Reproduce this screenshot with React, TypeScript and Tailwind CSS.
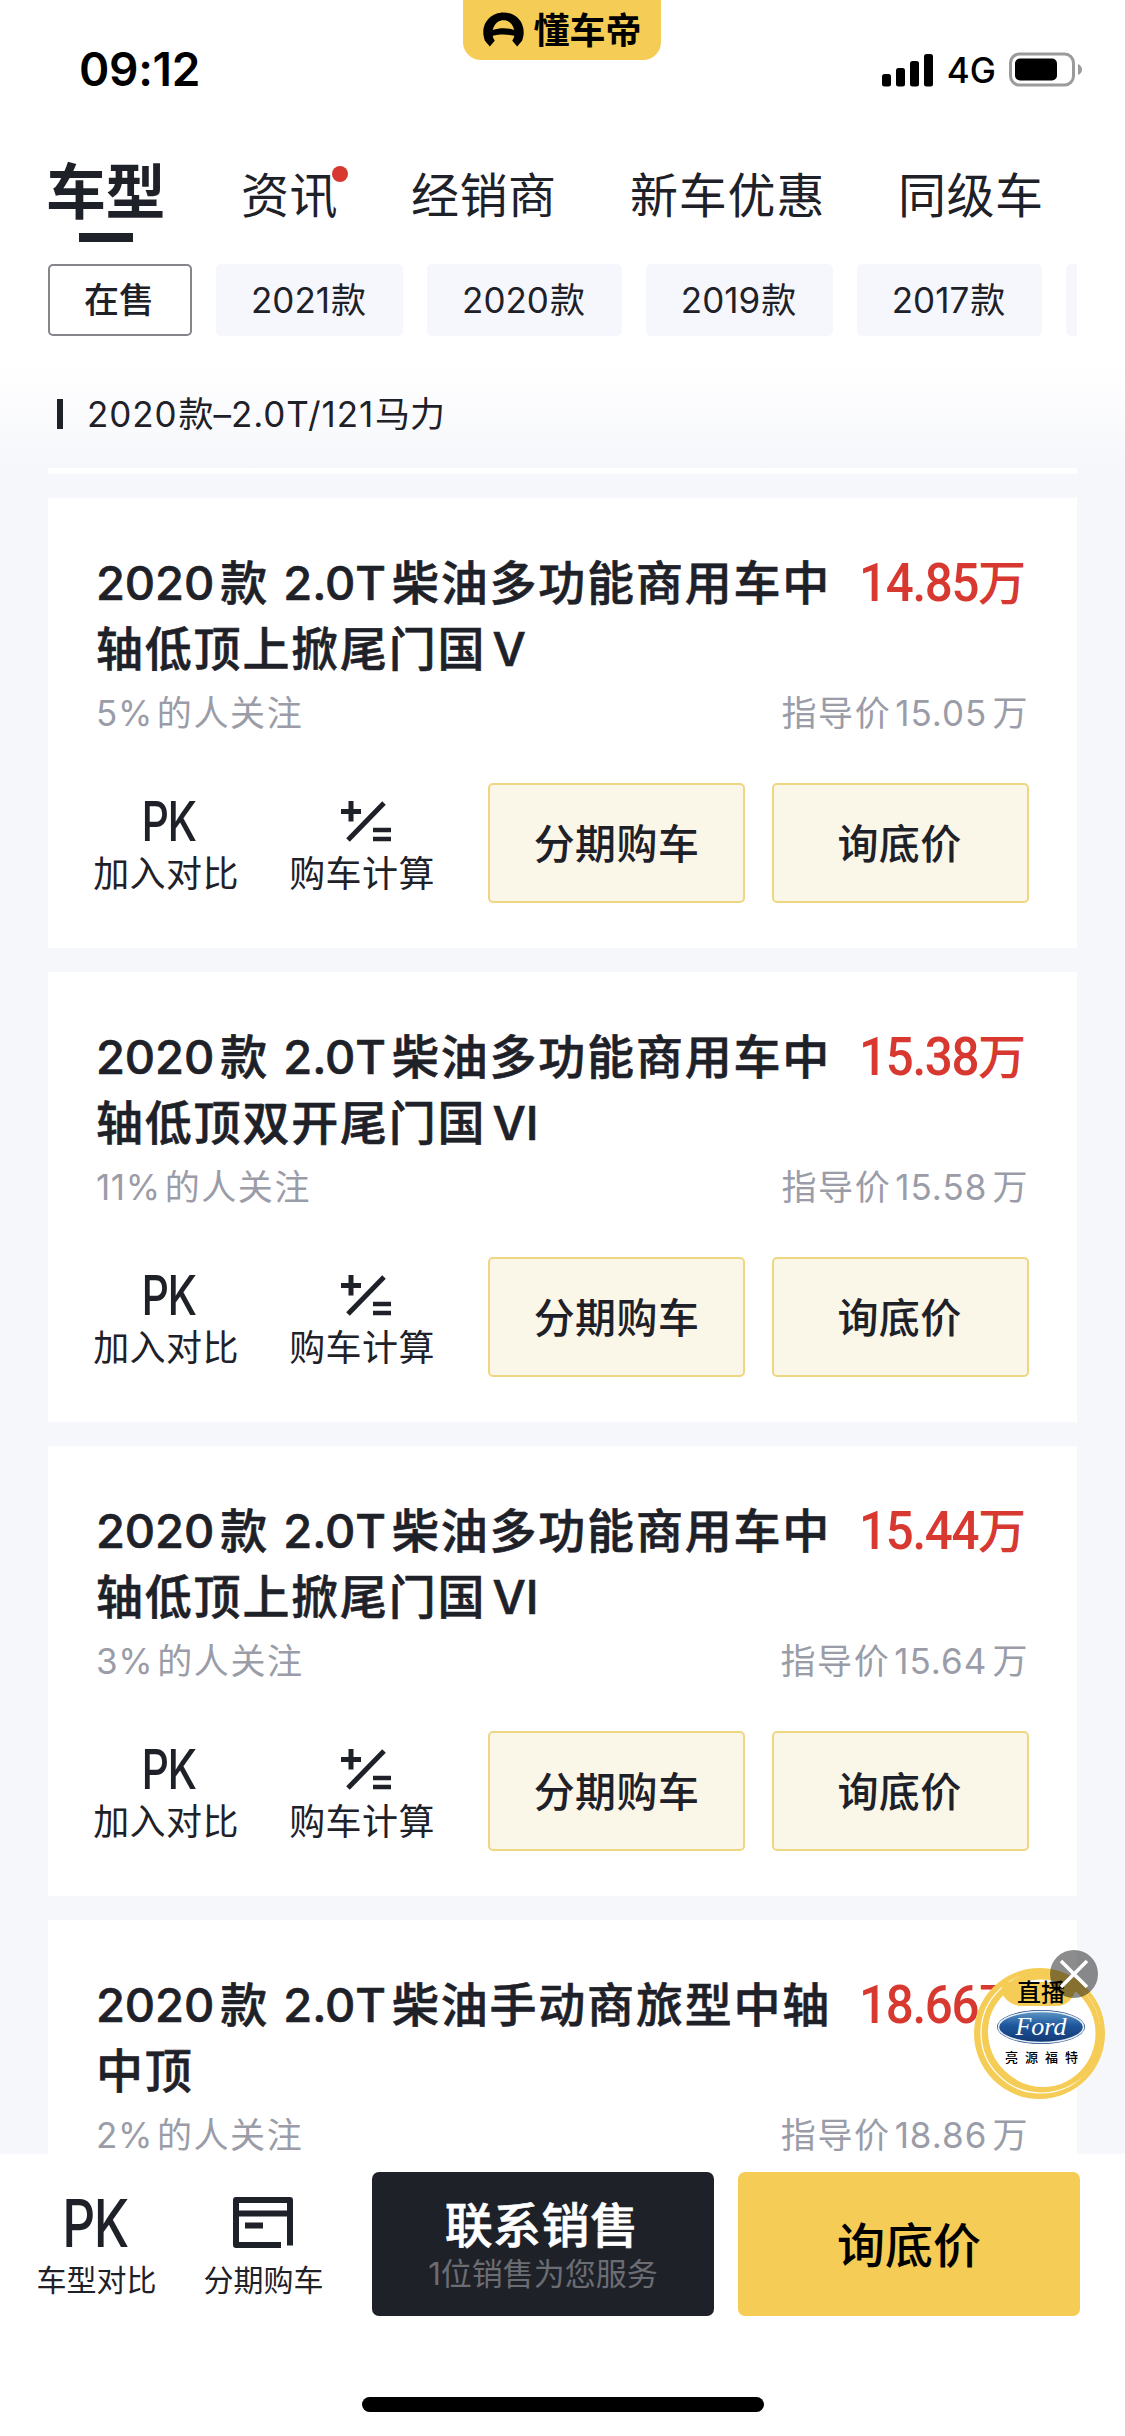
import React, { useState } from "react";

const models = [
  { id: 1, name: "2020款 2.0T柴油多功能商用车中轴低顶上掀尾门国V", price: "14.85", guide: "15.05", follow: "5%", actions: true },
  { id: 2, name: "2020款 2.0T柴油多功能商用车中轴低顶双开尾门国VI", price: "15.38", guide: "15.58", follow: "11%", actions: true },
  { id: 3, name: "2020款 2.0T柴油多功能商用车中轴低顶上掀尾门国VI", price: "15.44", guide: "15.64", follow: "3%", actions: true },
  { id: 4, name: "2020款 2.0T柴油手动商旅型中轴中顶", price: "18.66", guide: "18.86", follow: "2%", actions: false },
];

const years = [
  { label: "在售", width: "w-36" },
  { label: "2021款", width: "w-[187px]" },
  { label: "2020款", width: "w-[195px]" },
  { label: "2019款", width: "w-[187px]" },
  { label: "2017款", width: "w-[185px]" },
  { label: "", width: "w-[185px]" },
];

function StatusBar() {
  return (
    <div className="flex h-[132px] items-start">
      <div className="w-[463px] pl-[79px] pt-[42px] text-[46px] leading-[54px] font-semibold tracking-[-0.3px] text-black">09:12</div>
      <div className="flex h-[60px] w-[198px] items-start justify-center gap-[8px] rounded-b-[18px] bg-[#f5cd56] pt-[11px]">
        <svg width="43" height="37" viewBox="0 0 44 37">
          <path d="M8 36 L3 30 C-3 14 8 1 22 1 C36 1 47 14 41 30 L36 36 L31 30 C32 28 33 27 33 25 C26 23 18 23 11 25 C11 27 12 28 13 30 Z" fill="#000" />
          <path d="M11 19 C13 11 18 9 22 9 C26 9 31 11 33 19 C26 16.500 18 16.500 11 19 Z" fill="#f5cd56" />
        </svg>
        <span className="text-[36px] leading-[41px] font-bold text-black">懂车帝</span>
      </div>
      <div className="flex flex-1 items-center justify-end gap-[13px] pr-[43px] pt-[50px]">
        <svg width="52" height="33" viewBox="0 0 52 33">
          <rect x="0" y="20" width="9" height="12.500" rx="2.500" />
          <rect x="14" y="14" width="9" height="18.500" rx="2.500" />
          <rect x="28" y="7" width="9" height="25.500" rx="2.500" />
          <rect x="42" y="0" width="9" height="32.500" rx="2.500" />
        </svg>
        <span className="text-[35px] leading-[40px] font-medium text-black">4G</span>
        <svg width="73" height="36" viewBox="0 0 73 36">
          <rect x="1.500" y="2" width="63" height="31" rx="9" fill="none" stroke="#9b9b9b" strokeWidth="3" />
          <rect x="6" y="6.500" width="42" height="22" rx="5" />
          <path d="M69 12 Q73 14 73 17.500 Q73 21 69 23 Z" fill="#9b9b9b" />
        </svg>
      </div>
    </div>
  );
}

// digits and latin words get a little air around them, as in the app
function Mixed({ text, latin }: { text: string; latin: string }) {
  return (
    <>
      {text.split(/([0-9A-Z.%/]+)/).map((part, i) =>
        i % 2 ? <span key={i} className={`${latin} ${/^V/.test(part) ? "ml-[6px]" : ""}`}>{part}</span> : part
      )}
    </>
  );
}

function Tabs() {
  return (
    <div className="flex h-[132px] items-start text-[48px] leading-[60px] pt-[34px] tracking-[0.5px]">
      <div className="ml-[46px] w-[195px]">
        <p className="-mt-[4px] text-[60px] tracking-[-0.5px] font-bold">车型</p>
        <div className="ml-[33px] mt-[11px] h-[9px] w-[54px] bg-[#1f2129]" />
      </div>
      <div className="relative w-[170px]">
        资讯
        <span className="absolute left-[91px] top-0 h-4 w-4 rounded-full bg-[#d7382f]" />
      </div>
      <p className="w-[219px]">经销商</p>
      <p className="w-[268px] tracking-[0.8px]">新车优惠</p>
      <p>同级车</p>
    </div>
  );
}

function YearFilter() {
  const [active, setActive] = useState(0);

  return (
    <div className="mx-12 flex h-[72px] gap-6 overflow-hidden">
      {years.map((year, i) => (
        <button
          key={i}
          onClick={() => setActive(i)}
          className={`${year.width} shrink-0 rounded-[5px] pr-[2px] text-[35px] ${i === active ? "border-2 border-[#85868b] bg-white font-medium" : "bg-[#f6f7fc]"}`}
        >
          <Mixed text={year.label} latin="tracking-[0px] mr-[1px]" />
        </button>
      ))}
    </div>
  );
}

function PkIcon({ className }: { className: string }) {
  return <span className={`${className} block origin-center tracking-[-2px] font-medium`}>PK</span>;
}

function CalcIcon() {
  return (
    <svg width="50" height="42" viewBox="0 0 50 42" fill="none" stroke="#1f2129" strokeWidth="5">
      <path d="M0 10.500 H20 M10 0 V20.500 M7 39 L43 2" />
      <path d="M32 29 H50 M32 38 H50" strokeWidth="4.500" />
    </svg>
  );
}

function ModelCard({ model }: { model: (typeof models)[0] }) {
  return (
    <div className="h-[450px] shrink-0 bg-white pl-12 pr-[51px] pt-[52px]">
      <div className="flex items-start justify-between">
        <h2 className="w-[742px] text-[47px] leading-[66px] font-medium tracking-[1.800px] break-all [-webkit-text-stroke:0.6px_#1f2129]">
          <Mixed text={model.name} latin="font-medium tracking-[-0.1px] mr-[6px]" />
        </h2>
        <p className="flex items-center leading-[66px] text-[#d7382f] font-medium whitespace-nowrap">
          <span className="-ml-[20px] origin-right scale-x-[0.93] font-['Roboto'] text-[53px] tracking-[-1.400px]">{model.price}</span>
          <span className="text-[48px]">万</span>
        </p>
      </div>
      <div className="flex h-[60px] justify-between pt-[1px] text-[35px] leading-[60px] tracking-[1.600px] text-[#9a9ca8]">
        <p><Mixed text={`${model.follow}的人关注`} latin="tracking-[0.6px] mr-[4px]" /></p>
        <p className="-mr-[3px]"><Mixed text={`指导价${model.guide}万`} latin="tracking-[1px] ml-[4px] mr-[5px]" /></p>
      </div>
      {model.actions && (
        <div className="-ml-[3px] -mr-[5px] mt-[41px] flex h-[120px]">
          <div className="flex w-[146px] shrink-0 flex-col items-center">
            <PkIcon className="mt-[18px] ml-[6px] text-[55px] leading-[40px] scale-x-[0.78]" />
            <p className="mt-[9px] text-[36px] leading-[48px] tracking-[0.4px] whitespace-nowrap">加入对比</p>
          </div>
          <div className="ml-[50px] flex w-[146px] shrink-0 flex-col items-center">
            <div className="mt-[18px] ml-[8px] h-[40px]"><CalcIcon /></div>
            <p className="mt-[9px] text-[36px] leading-[48px] tracking-[0.4px] whitespace-nowrap">购车计算</p>
          </div>
          <button className="ml-[53px] w-[257px] shrink-0 rounded-[5px] border-2 border-[#efd680] bg-[#faf6e8] pt-[3px] text-[41px] tracking-[0.4px] font-medium">分期购车</button>
          <button className="ml-[27px] w-[257px] shrink-0 rounded-[5px] border-2 border-[#efd680] bg-[#faf6e8] pr-[2px] pt-[3px] text-[41px] tracking-[0.4px] font-medium">询底价</button>
        </div>
      )}
    </div>
  );
}

function LiveBadge({ onClose }: { onClose: () => void }) {
  return (
    <div className="absolute left-[974px] top-[1950px] h-[149px] w-[131px]">
      <svg className="absolute left-0 top-[18px]" width="131" height="131" viewBox="0 0 131 131">
        <defs>
          <linearGradient id="ford" x1="0" y1="0" x2="0" y2="1">
            <stop offset="0" stopColor="#5f97c6" />
            <stop offset="0.450" stopColor="#1e569c" />
            <stop offset="1" stopColor="#123873" />
          </linearGradient>
        </defs>
        <circle cx="65.500" cy="65.500" r="65.500" fill="#f5cd56" />
        <circle cx="67" cy="65" r="60" fill="none" stroke="#fff" strokeWidth="1.200" />
        <circle cx="67.500" cy="65.500" r="54" fill="#fff" />
        <circle cx="70" cy="63" r="58" fill="none" stroke="#f5cd56" strokeWidth="4" />
        <path d="M29 14 H103 V18 Q98 38 82 38 H48 Q34 38 27 24 Z" fill="#f5cd56" />
        <ellipse cx="67" cy="59" rx="44" ry="17" fill="#1d4a86" />
        <ellipse cx="67" cy="59" rx="42.500" ry="15.500" fill="url(#ford)" stroke="#e6eef6" strokeWidth="1.500" />
        <text x="67" y="67" textAnchor="middle" fontFamily="'Liberation Serif', serif" fontStyle="italic" fontSize="26" fill="#fff">Ford</text>
      </svg>
      <p className="absolute left-[43px] top-[27px] text-[24px] leading-[32px] font-medium text-black whitespace-nowrap">直播</p>
      <p className="absolute left-[31px] top-[98px] text-[13px] leading-[18px] font-medium tracking-[7px] text-black whitespace-nowrap">亮源福特</p>
      <button onClick={onClose} className="absolute left-[76px] top-0 h-12 w-12 rounded-full bg-black/45">
        <svg width="48" height="48" viewBox="0 0 48 48" stroke="#fff" strokeWidth="3.500">
          <path d="M11 11 L37 37 M37 11 L11 37" />
        </svg>
      </button>
    </div>
  );
}

function BottomBar() {
  return (
    <div className="flex h-[282px] shrink-0 flex-col items-center justify-between bg-white pb-6">
      <div className="flex h-[162px] w-full pt-[18px]">
        <div className="ml-[36px] flex w-[121px] flex-col items-center">
          <PkIcon className="-ml-[3px] mt-[27px] text-[66px] leading-[48px] scale-x-[0.78]" />
          <p className="mt-[15px] text-[30px] leading-[36px] whitespace-nowrap">车型对比</p>
        </div>
        <div className="ml-[46px] flex w-[121px] flex-col items-center">
          <svg className="-ml-[2px] mt-[25px]" width="60" height="52" viewBox="0 0 60 52" fill="none" stroke="#1f2129" strokeWidth="6" strokeLinejoin="round">
            <path d="M48 48 H3 V3 H57 V48.500 M3 16.500 H57 M12 28.500 H30" />
          </svg>
          <p className="mt-[13px] text-[30px] leading-[36px] whitespace-nowrap">分期购车</p>
        </div>
        <button className="ml-[48px] w-[342px] rounded-[7px] bg-[#1f2129] pt-[6px] text-white">
          <p className="-ml-[3px] text-[48px] leading-[50px] font-medium tracking-[0.4px] [-webkit-text-stroke:0.6px_#fff]">联系销售</p>
          <p className="mt-[3px] text-[31px] leading-[40px] text-[#6b6d73]">1位销售为您服务</p>
        </button>
        <button className="ml-6 w-[342px] rounded-[7px] bg-[#f5cd56] pt-[3px] text-[48px] font-medium text-black">询底价</button>
      </div>
      <div className="h-[15px] w-[402px] rounded-full bg-black" />
    </div>
  );
}

export default function App() {
  const [showLive, setShowLive] = useState(true);

  return (
    <div className="relative flex h-[2436px] w-[1125px] flex-col overflow-hidden bg-white font-['Inter','Noto_Sans_CJK_SC',sans-serif] text-[#1f2129]">
      <StatusBar />
      <Tabs />
      <YearFilter />
      <div className="flex h-[132px] shrink-0 items-center bg-linear-to-b from-white from-20% to-[#f6f7fb] pt-[24px] pl-[57px]">
        <div className="h-[30px] w-[6px] bg-[#1f2129]" />
        <p className="ml-[24px] text-[35px] leading-[48px]">
          <Mixed text="2020款–2.0T/121马力" latin="tracking-[0.9px] mr-[1px]" />
        </p>
      </div>
      <div className="flex min-h-0 flex-1 flex-col gap-6 overflow-hidden bg-[#f6f7fb] px-12">
        <div className="h-[6px] shrink-0 bg-white" />
        {models.map((model) => (
          <ModelCard key={model.id} model={model} />
        ))}
      </div>
      <BottomBar />
      {showLive && <LiveBadge onClose={() => setShowLive(false)} />}
    </div>
  );
}
